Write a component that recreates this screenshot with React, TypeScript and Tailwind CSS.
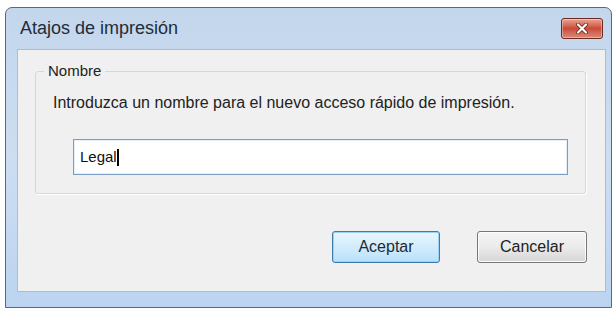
import React from "react";

const font = { fontFamily: '"Liberation Sans", Arial, sans-serif' };

function CloseButton() {
  return (
    <button className="flex h-[21px] w-[42px] items-center justify-center rounded-[3px] border border-[#6b2b22] bg-gradient-to-b from-[#eaa592] via-[#c9493a] to-[#d98a78] shadow-[inset_0_0_0_1px_rgba(255,255,255,0.35)]">
      <svg width="12" height="11" viewBox="0 0 12 11">
        <path d="M2 1.5 L10 9.5 M10 1.5 L2 9.5" stroke="#5a1a12" strokeWidth="3.6" strokeLinecap="round" />
        <path d="M2 1.5 L10 9.5 M10 1.5 L2 9.5" stroke="#ffffff" strokeWidth="2.2" strokeLinecap="round" />
      </svg>
    </button>
  );
}

export default function App() {
  return (
    <div className="h-[309px] w-[615px] bg-white pl-[5px] pt-[7px]" style={font}>
      <div className="flex h-[301px] w-[607px] flex-col rounded-t-[7px] border border-[#5f6772] bg-gradient-to-b from-[#c3d6ec] via-[#cddef2] to-[#bcd4f0]">
        {/* Title bar */}
        <div className="flex h-[41px] shrink-0 items-center justify-between pl-[14px] pr-[8px]">
          <span className="text-[18px] text-[#222c38]">Atajos de impresión</span>
          <CloseButton />
        </div>

        {/* Client area */}
        <div className="ml-[11px] mr-[5px] flex h-[243px] flex-col border border-[#a9bdd5] bg-[#f0f0f0]">
          <fieldset className="ml-[17px] mr-[23px] mt-[12px] h-[132px] rounded-[3px] border border-[#d7d7d7] px-[17px] shadow-[1px_1px_0_#ffffff]">
            <legend className="ml-[-9px] px-[4px] text-[15px] leading-[18px] text-[#222]">Nombre</legend>
            <p className="mt-[14px] text-[16px] leading-[18px] text-[#222]">
              Introduzca un nombre para el nuevo acceso rápido de impresión.
            </p>
            <div className="ml-[20px] mt-[27px] flex h-[36px] w-[495px] items-center border border-[#7a9ec4] bg-white pl-[6px] shadow-[inset_0_0_0_1px_#e3eef9]">
              <span className="text-[15px] text-[#111]">Legal</span>
              <span className="h-[17px] w-[2px] bg-black" />
            </div>
          </fieldset>

          <div className="mt-auto mb-[28px] flex justify-end gap-[37px] pr-[18px]">
            <button className="h-[32px] w-[108px] rounded-[3px] border border-[#3d7bad] bg-gradient-to-b from-[#eaf6fd] via-[#d2ecfc] to-[#b8e1fb] text-[16px] text-[#1d2a36] shadow-[inset_0_0_0_1px_#9ad3f5]">
              Aceptar
            </button>
            <button className="h-[32px] w-[110px] rounded-[3px] border border-[#777] bg-gradient-to-b from-[#f5f5f5] via-[#ebebeb] to-[#d6d6d6] text-[16px] text-[#222] shadow-[inset_0_0_0_1px_#fcfcfc]">
              Cancelar
            </button>
          </div>
        </div>
      </div>
    </div>
  );
}
